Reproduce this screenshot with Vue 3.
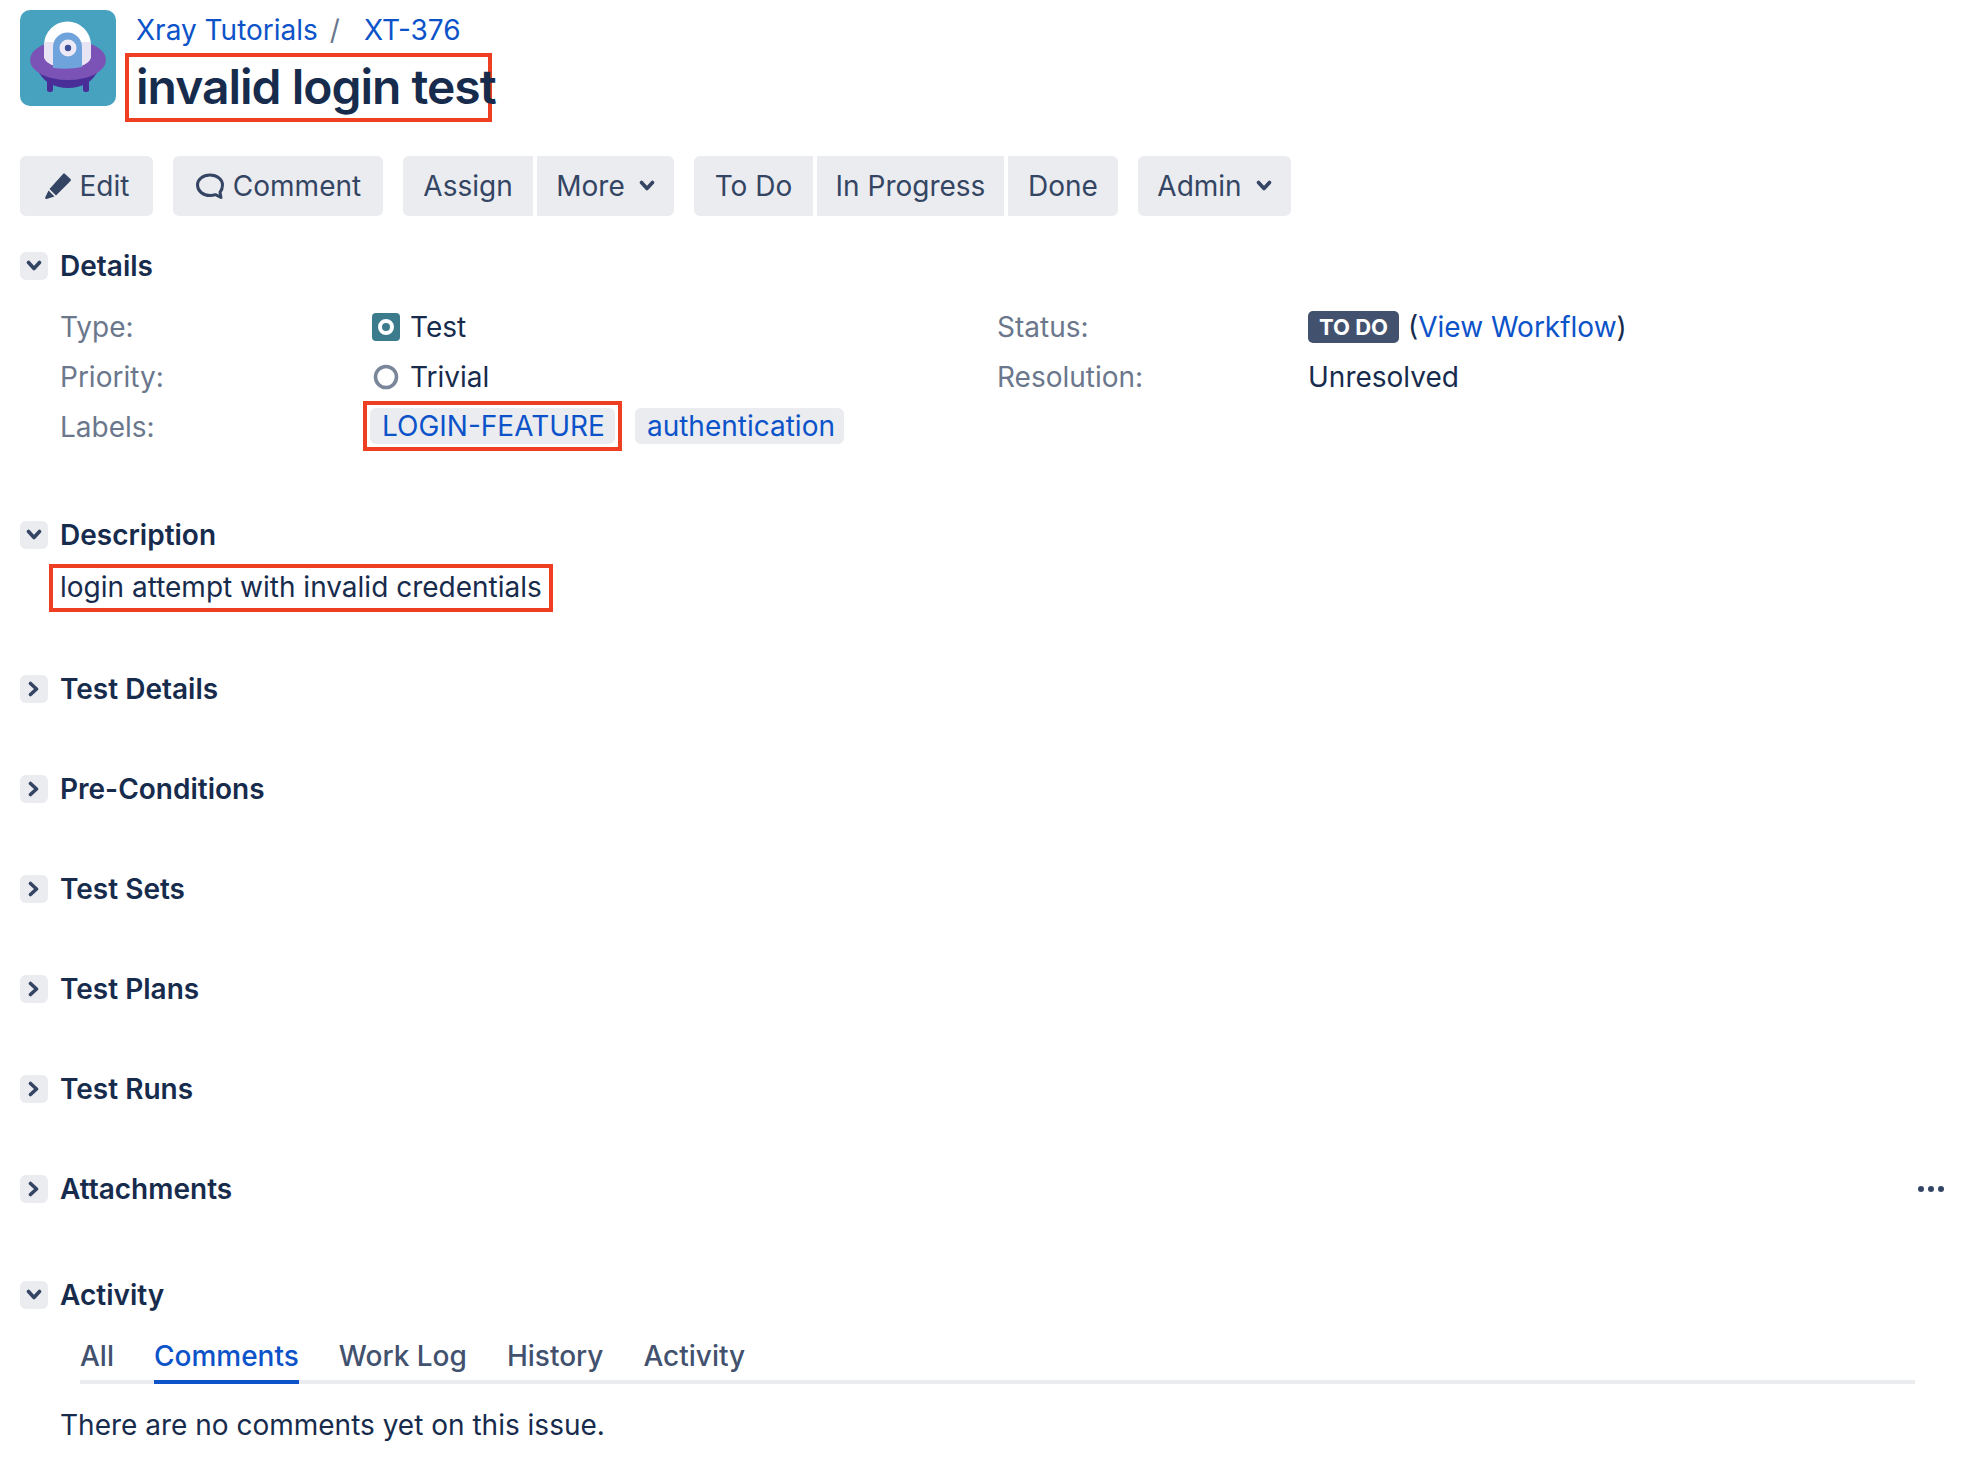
<script setup>
const collapsed = [
  { name: 'Test Details', h: 100 },
  { name: 'Pre-Conditions', h: 100 },
  { name: 'Test Sets', h: 100 },
  { name: 'Test Plans', h: 100 },
  { name: 'Test Runs', h: 100 },
]
const tabs = ['All', 'Comments', 'Work Log', 'History', 'Activity']
</script>

<template>
  <div class="page">
    <header class="head">
      <svg class="logo" viewBox="0 0 96 96" width="96" height="96">
        <rect width="96" height="96" rx="10" fill="#46A2BF" />
        <rect x="27" y="66" width="6" height="16" rx="2.5" fill="#4A2E98" />
        <rect x="63" y="66" width="6" height="16" rx="2.5" fill="#4A2E98" />
        <path d="M17 58 C22 72 34 78 48 78 C62 78 74 72 79 58 Z" fill="#4A2E98" />
        <ellipse cx="48" cy="50" rx="38" ry="20" fill="#7B52B5" />
        <path d="M24 35 A23.500 23.500 0 0 1 71 35 L71 46 C71 52 62 58 48 58 C34 58 24 52 24 46 Z" fill="#FFFFFF" />
        <path d="M24 32 H71 V46 C71 52 62 58 48 58 C34 58 24 52 24 46 Z" fill="#E9E4F4" />
        <path d="M33 58 V37 A14.500 14.500 0 0 1 62 37 V57 Q48 60 33 58 Z" fill="#6FA3DB" />
        <circle cx="48" cy="38" r="8.500" fill="#EDE9F6" />
        <circle cx="48" cy="38" r="3.200" fill="#3D4F96" />
      </svg>
      <div class="head-text">
        <nav class="crumbs">
          <a class="link">Xray Tutorials</a>
          <span class="sep">/</span>
          <a class="link">XT-376</a>
        </nav>
        <h1 class="title">invalid login test</h1>
      </div>
    </header>

    <div class="toolbar">
      <button class="btn edit">
        <svg width="28" height="28" viewBox="0 0 28 28">
          <path d="M20.500 1.500 L26.500 7 Q27.500 8 26.500 9 L12 23.500 L5.500 17 L19 2 Q19.800 1 20.500 1.500 Z" fill="#344563" />
          <path d="M4.500 18.500 L10.500 24.500 L2.500 27 Q1 27.200 1.200 25.500 Z" fill="#344563" />
        </svg>
        <span>Edit</span>
      </button>
      <button class="btn comment">
        <svg width="30" height="28" viewBox="0 0 30 28">
          <path d="M15 3 C22 3 27.500 7.300 27.500 13 C27.500 16 26.500 18.500 25 20.200 L26 25.500 L20.500 22.700 C18.800 23.300 17 23.500 15 23.500 C8 23.500 2.500 19 2.500 13 C2.500 7.300 8 3 15 3 Z" fill="none" stroke="#344563" stroke-width="3" stroke-linejoin="round" />
        </svg>
        <span>Comment</span>
      </button>
      <div class="group">
        <button class="btn assign">Assign</button>
        <button class="btn more">
          <span>More</span>
          <svg class="caret" width="16" height="12" viewBox="0 0 16 12"><path d="M2.500 2.500 L8 8.500 L13.500 2.500" fill="none" stroke="#344563" stroke-width="3.600" stroke-linecap="round" stroke-linejoin="round" /></svg>
        </button>
      </div>
      <div class="group">
        <button class="btn todo">To Do</button>
        <button class="btn progress">In Progress</button>
        <button class="btn done">Done</button>
      </div>
      <button class="btn admin">
        <span>Admin</span>
        <svg class="caret" width="16" height="12" viewBox="0 0 16 12"><path d="M2.500 2.500 L8 8.500 L13.500 2.500" fill="none" stroke="#344563" stroke-width="3.600" stroke-linecap="round" stroke-linejoin="round" /></svg>
      </button>
    </div>

    <section class="details">
      <div class="sec-head">
        <span class="toggle"><svg width="16" height="12" viewBox="0 0 16 12"><path d="M2.500 2.500 L8 8.500 L13.500 2.500" fill="none" stroke="#344563" stroke-width="3.600" stroke-linecap="round" stroke-linejoin="round" /></svg></span>
        <h2>Details</h2>
      </div>
      <div class="grid">
        <div class="col">
          <div class="row">
            <span class="lbl">Type:</span>
            <span class="val">
              <svg class="ico" width="28" height="28" viewBox="0 0 28 28">
                <rect width="28" height="28" rx="4" fill="#3B7B8C" />
                <circle cx="14" cy="14" r="6" fill="none" stroke="#FFFFFF" stroke-width="4" />
              </svg>
              Test
            </span>
          </div>
          <div class="row">
            <span class="lbl">Priority:</span>
            <span class="val">
              <svg class="ico" width="28" height="28" viewBox="0 0 28 28">
                <circle cx="14" cy="14" r="10.500" fill="none" stroke="#7A869A" stroke-width="3.600" />
              </svg>
              Trivial
            </span>
          </div>
          <div class="row labels">
            <span class="lbl">Labels:</span>
            <span class="val tags">
              <span class="boxed-tag"><a class="tag">LOGIN-FEATURE</a></span>
              <a class="tag">authentication</a>
            </span>
          </div>
        </div>
        <div class="col">
          <div class="row">
            <span class="lbl">Status:</span>
            <span class="val">
              <span class="badge">TO DO</span>
              <span class="wf">(<a class="link">View Workflow</a>)</span>
            </span>
          </div>
          <div class="row">
            <span class="lbl">Resolution:</span>
            <span class="val">Unresolved</span>
          </div>
        </div>
      </div>
    </section>

    <section class="description">
      <div class="sec-head">
        <span class="toggle"><svg width="16" height="12" viewBox="0 0 16 12"><path d="M2.500 2.500 L8 8.500 L13.500 2.500" fill="none" stroke="#344563" stroke-width="3.600" stroke-linecap="round" stroke-linejoin="round" /></svg></span>
        <h2>Description</h2>
      </div>
      <p class="desc">login attempt with invalid credentials</p>
    </section>

    <section class="collapsed-list">
      <div v-for="item in collapsed" :key="item.name" class="sec-head collapsed">
        <span class="toggle"><svg width="12" height="16" viewBox="0 0 12 16"><path d="M2.500 2.500 L8.500 8 L2.500 13.500" fill="none" stroke="#344563" stroke-width="3.600" stroke-linecap="round" stroke-linejoin="round" /></svg></span>
        <h2>{{ item.name }}</h2>
      </div>
      <div class="sec-head collapsed attach">
        <span class="toggle"><svg width="12" height="16" viewBox="0 0 12 16"><path d="M2.500 2.500 L8.500 8 L2.500 13.500" fill="none" stroke="#344563" stroke-width="3.600" stroke-linecap="round" stroke-linejoin="round" /></svg></span>
        <h2>Attachments</h2>
        <span class="dots"><i></i><i></i><i></i></span>
      </div>
    </section>

    <section class="activity">
      <div class="sec-head">
        <span class="toggle"><svg width="16" height="12" viewBox="0 0 16 12"><path d="M2.500 2.500 L8 8.500 L13.500 2.500" fill="none" stroke="#344563" stroke-width="3.600" stroke-linecap="round" stroke-linejoin="round" /></svg></span>
        <h2>Activity</h2>
      </div>
      <div class="tabs">
        <a v-for="t in tabs" :key="t" class="tab" :class="{ active: t === 'Comments' }">{{ t }}</a>
      </div>
      <p class="none">There are no comments yet on this issue.</p>
    </section>
  </div>
</template>

<style scoped>
.page {
  width: 1964px;
  height: 1462px;
  box-sizing: border-box;
  padding: 10px 20px 0;
  overflow: hidden;
  background: #fff;
  font-family: Inter, "Liberation Sans", sans-serif;
  font-size: 28px;
  line-height: 40px;
  color: #172b4d;
}
.head {
  display: flex;
  height: 112px;
}
.logo {
  flex: none;
  display: block;
}
.head-text {
  margin-left: 9px;
}
.crumbs {
  display: flex;
  align-items: center;
  height: 32px;
  margin-left: 11px;
  margin-top: 4px;
  line-height: 32px;
}
.link {
  color: #0c53c9;
}
.sep {
  margin: 0 24px 0 12px;
  color: #6b778c;
}
.title {
  display: inline-block;
  margin: 7px 0 0;
  box-sizing: border-box;
  width: 367px;
  height: 69px;
  padding: 0 0 0 7px;
  border: 4px solid #ee3f22;
  font-size: 48px;
  line-height: 60px;
  font-weight: 600;
  letter-spacing: -1px;
  white-space: nowrap;
}
.toolbar {
  display: flex;
  gap: 20px;
  margin-top: 34px;
  height: 60px;
}
.group {
  display: flex;
  gap: 4px;
}
.btn {
  display: flex;
  align-items: center;
  justify-content: center;
  box-sizing: border-box;
  height: 60px;
  padding: 0;
  border: 0;
  border-radius: 6px;
  background: #ebecf0;
  color: #344563;
  font: inherit;
}
.group .btn {
  border-radius: 0;
}
.group .btn:first-child {
  border-radius: 6px 0 0 6px;
}
.group .btn:last-child {
  border-radius: 0 6px 6px 0;
}
.edit { width: 133px; gap: 8px; }
.comment { width: 210px; gap: 8px; }
.assign { width: 130px; }
.more { width: 137px; gap: 14px; }
.todo { width: 119px; }
.progress { width: 187px; }
.done { width: 110px; }
.admin { width: 153px; gap: 14px; }
.caret { flex: none; }
.sec-head {
  display: flex;
  align-items: center;
  gap: 12px;
  height: 28px;
}
.sec-head h2 {
  margin: 0;
  font-size: 28px;
  line-height: 40px;
  font-weight: 600;
  color: #172b4d;
}
.toggle {
  display: flex;
  align-items: center;
  justify-content: center;
  width: 28px;
  height: 28px;
  border-radius: 6px;
  background: #ebecf0;
}
.details {
  margin-top: 36px;
}
.grid {
  display: grid;
  grid-template-columns: 937px 1fr;
  margin-top: 22px;
  padding-left: 40px;
}
.row {
  display: flex;
  align-items: center;
  height: 50px;
}
.lbl {
  flex: none;
  color: #6b778c;
}
.col:first-child .lbl { width: 312px; }
.col:last-child .lbl { width: 311px; }
.val {
  display: flex;
  align-items: center;
  white-space: nowrap;
}
.ico {
  margin-right: 10px;
}
.tags {
  margin-left: -9px;
  transform: translateY(-1px);
}
.boxed-tag {
  display: flex;
  padding: 3px;
  border: 4px solid #ee3f22;
  margin-right: 13px;
}
.tag {
  display: block;
  height: 36px;
  padding: 0 9px 0 12px;
  line-height: 36px;
  border-radius: 6px;
  background: #ebecf0;
  color: #0c53c9;
}
.boxed-tag .tag {
  padding-right: 10px;
}
.badge {
  box-sizing: border-box;
  width: 91px;
  height: 32px;
  border-radius: 5px;
  background: #42526e;
  color: #fff;
  font-size: 22px;
  font-weight: 700;
  line-height: 32px;
  text-align: center;
}
.wf {
  margin-left: 9px;
}
.description {
  margin-top: 69px;
}
.desc {
  display: inline-block;
  margin: 15px 0 0 29px;
  box-sizing: border-box;
  height: 48px;
  padding: 0 7px;
  border: 4px solid #ee3f22;
  line-height: 39px;
}
.collapsed-list {
  margin-top: 63px;
}
.collapsed {
  margin-bottom: 72px;
}
.collapsed.attach {
  position: relative;
  margin-bottom: 0;
}
.dots {
  display: flex;
  gap: 4px;
  margin-left: auto;
  margin-right: 0;
  padding-right: 0;
}
.dots i {
  display: block;
  width: 6px;
  height: 6px;
  border-radius: 50%;
  background: #344563;
}
.activity {
  margin-top: 78px;
}
.tabs {
  display: flex;
  gap: 40px;
  height: 56px;
  margin: 19px 29px 0 60px;
  box-shadow: inset 0 -4px 0 #ebecf0;
}
.tab {
  display: block;
  height: 56px;
  box-sizing: border-box;
  padding-top: 8px;
  color: #42526e;
  font-weight: 500;
}
.tab.active {
  color: #0c53c9;
  border-bottom: 4px solid #0c53c9;
}
.none {
  margin: 21px 0 0 40px;
}
</style>
